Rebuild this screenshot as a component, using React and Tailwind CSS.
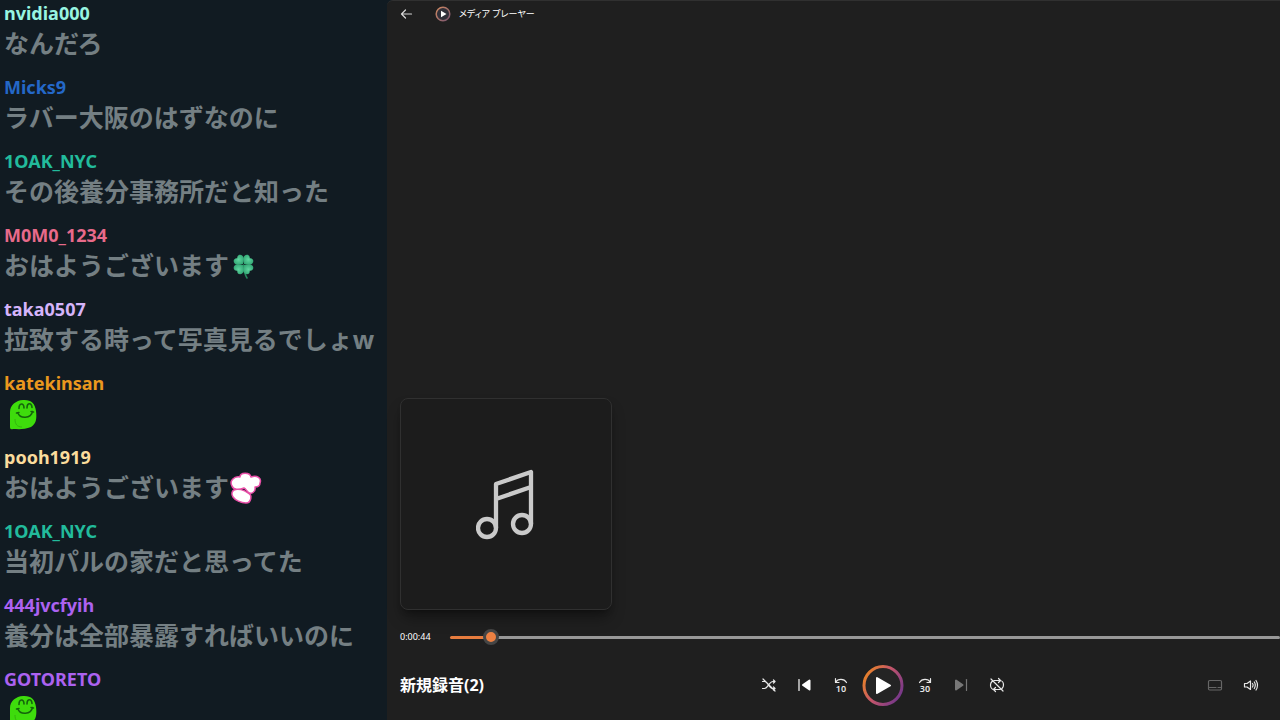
import React, { useId, useState } from "react";

const messages = [
  { name: "nvidia000", color: "text-[#98f5e1]", text: "なんだろ" },
  { name: "Micks9", color: "text-[#2468c8]", text: "ラバー大阪のはずなのに" },
  { name: "1OAK_NYC", color: "text-[#22bb9c]", text: "その後養分事務所だと知った" },
  { name: "M0M0_1234", color: "text-[#e86a8a]", text: "おはようございます", emote: "clover" },
  { name: "taka0507", color: "text-[#d5b4fb]", text: "拉致する時って写真見るでしょw" },
  { name: "katekinsan", color: "text-[#eb981e]", emote: "slime" },
  { name: "pooh1919", color: "text-[#fbdc9c]", text: "おはようございます", emote: "puff" },
  { name: "1OAK_NYC", color: "text-[#22bb9c]", text: "当初パルの家だと思ってた" },
  { name: "444jvcfyih", color: "text-[#ac62f0]", text: "養分は全部暴露すればいいのに" },
  { name: "GOTORETO", color: "text-[#ac62f0]", emote: "slime" },
];

function Clover() {
  const leaf = "M0 -0.800C-3-2.500-5.500-4-5.500-7C-5.500-10-2-11.500 0-8.800C2-11.500 5.500-10 5.500-7C5.500-4 3-2.500 0-0.800Z";
  const gradient = useId();
  return (
    <svg viewBox="0 -3 30 34" className="h-[34px] w-[30px] shrink-0" role="img" aria-label="四つ葉">
      <defs>
        <radialGradient id={gradient} gradientUnits="userSpaceOnUse" cx="0" cy="-7" r="7">
          <stop offset="0" stopColor="#5fd6a0" />
          <stop offset="1" stopColor="#279b69" />
        </radialGradient>
      </defs>
      <path d="M14.500 14C15 20 16 24 18 27" fill="none" stroke="#25885d" strokeWidth="1.600" strokeLinecap="round" />
      {[-45, 45, 135, 225].map((angle) => (
        <path key={angle} d={leaf} fill={`url(#${gradient})`} transform={`translate(14.500 13.500) rotate(${angle})`} />
      ))}
    </svg>
  );
}

function Slime() {
  return (
    <svg viewBox="0 -3 36 34" className="h-[34px] w-9 shrink-0" role="img" aria-label="スライム">
      <path d="M6 28V13C6 6 12 1.500 19 1C27 .5 31 4 32 12C33 20 32 25 27 28C20 31 13 30 9 30C7 30.500 6 30 6 28Z" fill="#3edc0c" />
      <path d="M15 9.500C15 3.500 20 3.500 20 9M23 9C23 3.500 28 3.500 28 8.500" fill="none" stroke="#14630c" strokeWidth="1.600" strokeLinecap="round" />
      <path d="M14 14C16 20 27 20 28.500 12.500M12.500 14L15 13.500M27 12.500L29.500 13" fill="none" stroke="#14630c" strokeWidth="1.500" strokeLinecap="round" />
      <path d="M11 20C11 25 13 28 18 28" fill="none" stroke="#33b50d" strokeWidth="1" />
    </svg>
  );
}

function Puff() {
  return (
    <svg viewBox="0 -3 34 36" className="h-9 w-[34px] shrink-0" role="img" aria-label="もくもく">
      <g fill="#fff" stroke="#e94fa8" strokeWidth="1.500" strokeLinejoin="round">
        <path d="M5 18C9 16 15 18 19 21C24 23 22 31 17 31C12 31 6 28 4 25C2 22 3 19 5 18Z" />
        <path d="M11 5C11 0 21 0 22 5C28 3 33 6 31 11C31 14 29 15 26 15C27 20 22 23 19 20C17 18 17 17 15 16C10 18 4 18 3 14C0 9 5 4 11 5Z" />
      </g>
    </svg>
  );
}

const emotes = { clover: Clover, slime: Slime, puff: Puff };

function ChatMessage({ name, color, text, emote }) {
  const Emote = emote ? emotes[emote] : null;
  return (
    <li className="h-[74px] shrink-0">
      <p className={`text-lg/[26px] font-bold ${color}`}>{name}</p>
      <p className="flex h-[34px] items-center whitespace-nowrap text-[25px]/8 font-bold text-[#747f83]">
        {text}
        {Emote && <Emote />}
      </p>
    </li>
  );
}

function Icon({ children, className = "size-4" }) {
  return (
    <svg
      viewBox="0 0 16 16"
      className={className}
      fill="none"
      stroke="currentColor"
      strokeWidth="1.200"
      strokeLinecap="round"
      strokeLinejoin="round"
      aria-hidden="true"
    >
      {children}
    </svg>
  );
}

function IconButton({ label, children, color = "text-[#e8e8e8]", disabled = false }) {
  return (
    <button type="button" aria-label={label} disabled={disabled} className={`flex size-8 items-center justify-center ${color}`}>
      {children}
    </button>
  );
}

function SkipIcon({ seconds, forward }) {
  return (
    <Icon>
      <path d={forward ? "M13.500 1.500V5.500H10M13.300 5.200C11 1.500 5 1.500 2.500 5.500" : "M2.500 1.500V5.500H6M2.700 5.200C5 1.500 11 1.500 13.500 5.500"} />
      <text x="8" y="14.500" textAnchor="middle" fill="currentColor" stroke="none" className="text-[9px] font-semibold">
        {seconds}
      </text>
    </Icon>
  );
}

function BrandIcon() {
  return (
    <svg viewBox="0 0 16 16" className="size-4" aria-hidden="true">
      <defs>
        <linearGradient id="brand-ring" x1="0" y1="0" x2="1" y2="1">
          <stop offset="0" stopColor="#d28a61" />
          <stop offset="1" stopColor="#76536f" />
        </linearGradient>
      </defs>
      <circle cx="8" cy="8" r="6.800" fill="#303039" stroke="url(#brand-ring)" strokeWidth="1.500" />
      <path d="M6 4.800L11.500 8L6 11.200Z" fill="#fff" />
    </svg>
  );
}

function PlayIcon() {
  return (
    <svg viewBox="0 0 44 44" className="size-11" aria-hidden="true">
      <defs>
        <linearGradient id="play-ring" x1="0" y1="0.200" x2="1" y2="0.800">
          <stop offset="0" stopColor="#e98425" />
          <stop offset="0.450" stopColor="#c4566a" />
          <stop offset="1" stopColor="#70358c" />
        </linearGradient>
      </defs>
      <circle cx="22" cy="22.500" r="19" fill="#242424" stroke="url(#play-ring)" strokeWidth="3" />
      <path d="M16 15L29 22.500L16 30Z" fill="#fff" stroke="#fff" strokeWidth="2" strokeLinejoin="round" />
    </svg>
  );
}

function MusicIcon() {
  return (
    <svg viewBox="1 0 60 72" className="h-[72px] w-[60px]" fill="none" stroke="#cacaca" strokeWidth="4.300" strokeLinejoin="round" aria-hidden="true">
      <circle cx="12" cy="60" r="9" />
      <circle cx="47" cy="56" r="9" />
      <path d="M21 60V16L56 4V56M21 31L56 19" />
    </svg>
  );
}

export default function App() {
  const [position, setPosition] = useState(4);
  return (
    <div className="flex h-screen overflow-hidden bg-[#111b22] font-['Noto_Sans','Noto_Sans_CJK_JP',sans-serif]">
      <aside className="w-[387px] shrink-0 overflow-hidden" aria-label="チャット">
        <ul className="flex flex-col pl-1">
          {messages.map((message, index) => (
            <ChatMessage key={index} {...message} />
          ))}
        </ul>
      </aside>

      <main className="flex min-w-0 flex-1 flex-col rounded-tl-md border-t border-[#303030] bg-[#1f1f1f] pb-[13px] text-white">
        <header className="flex h-[26px] items-center pl-3">
          <button type="button" aria-label="戻る" className="flex size-4 items-center justify-center text-[#d8d8d8]">
            <Icon className="size-4">
              <path d="M12.500 8H2.500M6.500 4L2.500 8L6.500 12" />
            </Icon>
          </button>
          <h1 className="ml-5 flex items-center gap-2 text-[9px]/4 font-normal [font-feature-settings:'palt']">
            <BrandIcon />
            メディア プレーヤー
          </h1>
        </header>

        <section className="flex flex-1 items-end pl-[13px]" aria-label="アルバムアート">
          <div className="flex size-[212px] items-center justify-center rounded-lg border border-[#303030] bg-[#1c1c1c] shadow-lg shadow-black/40">
            <MusicIcon />
          </div>
        </section>

        <div className="mt-[17px] flex h-5 items-center pl-[13px]">
          <label htmlFor="seek" className="w-[50px] shrink-0 text-[9px]/4">
            0:00:44
          </label>
          <input
            id="seek"
            type="range"
            min="0"
            max="100"
            value={position}
            onChange={(event) => setPosition(Number(event.target.value))}
            style={{ backgroundImage: `linear-gradient(to right, #e67c3e ${position}%, #989898 ${position}%)` }}
            className="h-[3px] min-w-0 flex-1 appearance-none rounded-full [&::-webkit-slider-thumb]:size-4 [&::-webkit-slider-thumb]:appearance-none [&::-webkit-slider-thumb]:rounded-full [&::-webkit-slider-thumb]:border-[3px] [&::-webkit-slider-thumb]:border-[#454545] [&::-webkit-slider-thumb]:bg-[#ed8042]"
          />
        </div>

        <footer className="mt-4 flex h-11 items-center px-[13px]">
          <h2 className="w-[353px] text-base font-bold">新規録音(2)</h2>
          <div className="flex items-center gap-1">
            <IconButton label="シャッフル オフ">
              <Icon>
                <path d="M1.500 4.500H3.500C7 4.500 8 11.500 12 11.500H14M1.500 11.500H3.500C7 11.500 8 4.500 12 4.500H14M12.500 3L14 4.500L12.500 6M12.500 10L14 11.500L12.500 13M2 2L14 14" />
              </Icon>
            </IconButton>
            <IconButton label="前へ" color="text-white">
              <Icon>
                <path d="M2 2.500V13.500" />
                <path d="M12.500 3.500V12.500L6 8Z" fill="currentColor" strokeWidth="2" />
              </Icon>
            </IconButton>
            <IconButton label="10 秒戻る">
              <SkipIcon seconds="10" />
            </IconButton>
            <button type="button" aria-label="再生" className="size-11">
              <PlayIcon />
            </button>
            <IconButton label="30 秒進む">
              <SkipIcon seconds="30" forward />
            </IconButton>
            <IconButton label="次へ" color="text-[#777777]" disabled>
              <Icon>
                <path d="M13.500 2.500V13.500" />
                <path d="M3 3.500V12.500L9.500 8Z" fill="currentColor" strokeWidth="2" />
              </Icon>
            </IconButton>
            <IconButton label="リピート オフ">
              <Icon>
                <path d="M5 3.500H11C13 3.500 14.500 5.500 14.500 8C14.500 9.500 14 10.500 13 11.500M9.500 1.500L11.500 3.500L9.500 5.500M11 12.500H5C3 12.500 1.500 10.500 1.500 8C1.500 6.500 2 5.500 3 4.500M6.500 10.500L4.500 12.500L6.500 14.500M2 2L14 14" />
              </Icon>
            </IconButton>
          </div>
          <div className="ml-auto flex items-center gap-1">
            <IconButton label="字幕" color="text-[#666666]" disabled>
              <Icon>
                <rect x="1.500" y="3.500" width="13" height="9.500" rx="1.200" />
                <path d="M2 10.500H9M11 10.500H14" />
              </Icon>
            </IconButton>
            <IconButton label="音量">
              <Icon>
                <path d="M1.500 6.500H4L7.500 4V12.500L4 10H1.500ZM9.500 6.500Q10.700 8 9.500 10M11.300 5Q13.300 8 11.300 11.500M13 3.500Q16 8 13 13" />
              </Icon>
            </IconButton>
          </div>
        </footer>
      </main>
    </div>
  );
}
